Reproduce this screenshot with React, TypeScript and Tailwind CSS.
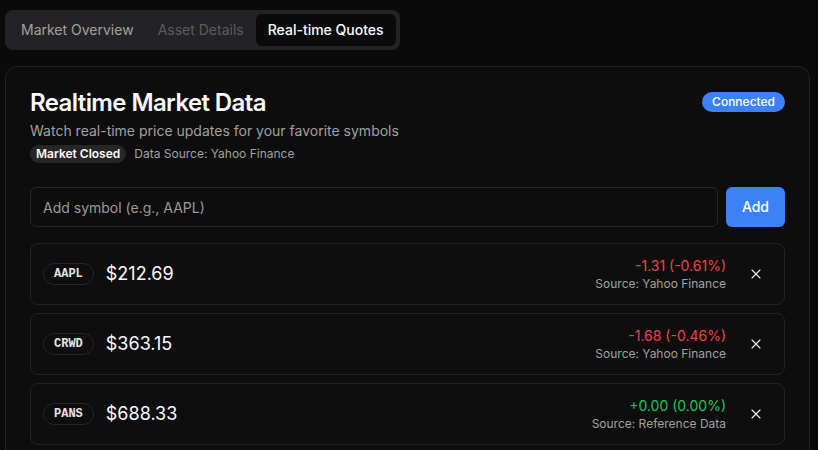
import { X } from 'lucide-react'

type Quote = {
    symbol: string
    price: string
    change: string
    source: string
    up: boolean
}

const quotes: Quote[] = [
    { symbol: 'AAPL', price: '$212.69', change: '-1.31 (-0.61%)', source: 'Source: Yahoo Finance', up: false },
    { symbol: 'CRWD', price: '$363.15', change: '-1.68 (-0.46%)', source: 'Source: Yahoo Finance', up: false },
    { symbol: 'PANS', price: '$688.33', change: '+0.00 (0.00%)', source: 'Source: Reference Data', up: true },
]

function QuoteRow({ q }: { q: Quote }) {
    return (
        <div className="flex items-center justify-between rounded-lg border border-[#232323] bg-[#0e0e0e] p-3">
            <div className="flex items-center gap-3">
                <span className="rounded-full border border-[#262626] px-2.5 py-0.5 font-['Liberation_Mono',monospace] text-xs font-bold text-[#e5e5e5]">
                    {q.symbol}
                </span>
                <span className="text-lg text-[#fafafa]">{q.price}</span>
            </div>
            <div className="flex items-center gap-[14px]">
                <div className="flex flex-col items-end">
                    <span className={`text-sm ${q.up ? 'text-[#22c55e]' : 'text-[#ef4444]'}`}>{q.change}</span>
                    <span className="text-xs text-[#a1a1a1]">{q.source}</span>
                </div>
                <button className="flex h-8 w-8 items-center justify-center rounded-md text-[#e5e5e5]">
                    <X className="h-4 w-4" strokeWidth={1.75} />
                </button>
            </div>
        </div>
    )
}

export default function App() {
    return (
        <div className="min-h-[450px] bg-[#0a0a0a] pl-[5px] pr-[8px] pt-[10px] font-['Inter',sans-serif] text-[#fafafa]">
            <div className="inline-flex h-10 items-center rounded-lg bg-[#232325] p-1 text-sm">
                <div className="px-3 py-1.5 text-[#a1a1a1]">Market Overview</div>
                <div className="px-3 py-1.5 text-[#5c5c5e]">Asset Details</div>
                <div className="rounded-md bg-[#0a0a0a] px-3 py-1.5 font-medium text-[#fafafa]">Real-time Quotes</div>
            </div>

            <div className="mt-4 rounded-xl border border-[#232323] bg-[#0d0d0d]">
                <div className="flex items-start justify-between p-6">
                    <div>
                        <h2 className="text-2xl font-semibold leading-none tracking-tight">Realtime Market Data</h2>
                        <p className="mt-1.5 text-sm text-[#a1a1a1]">Watch real-time price updates for your favorite symbols</p>
                        <div className="mt-1 flex items-center gap-2">
                            <span className="rounded-full bg-[#262626] px-1.5 py-px text-xs font-semibold text-[#fafafa]">
                                Market Closed
                            </span>
                            <span className="text-xs text-[#a1a1a1]">Data Source: Yahoo Finance</span>
                        </div>
                    </div>
                    <span className="mt-px rounded-full bg-[#3b82f6] px-2.5 py-0.5 text-xs font-medium text-white">
                        Connected
                    </span>
                </div>

                <div className="px-6 pb-6">
                    <div className="flex gap-2">
                        <input
                            className="h-10 flex-1 rounded-md border border-[#262626] bg-transparent px-3 text-sm text-[#fafafa] outline-none placeholder:text-[#9a9a9a]"
                            placeholder="Add symbol (e.g., AAPL)"
                        />
                        <button className="h-10 rounded-md bg-[#3b82f6] px-4 text-sm font-medium text-white">Add</button>
                    </div>

                    <div className="mt-4 flex flex-col gap-2">
                        {quotes.map((q) => (
                            <QuoteRow key={q.symbol} q={q} />
                        ))}
                    </div>
                </div>
            </div>
        </div>
    )
}
